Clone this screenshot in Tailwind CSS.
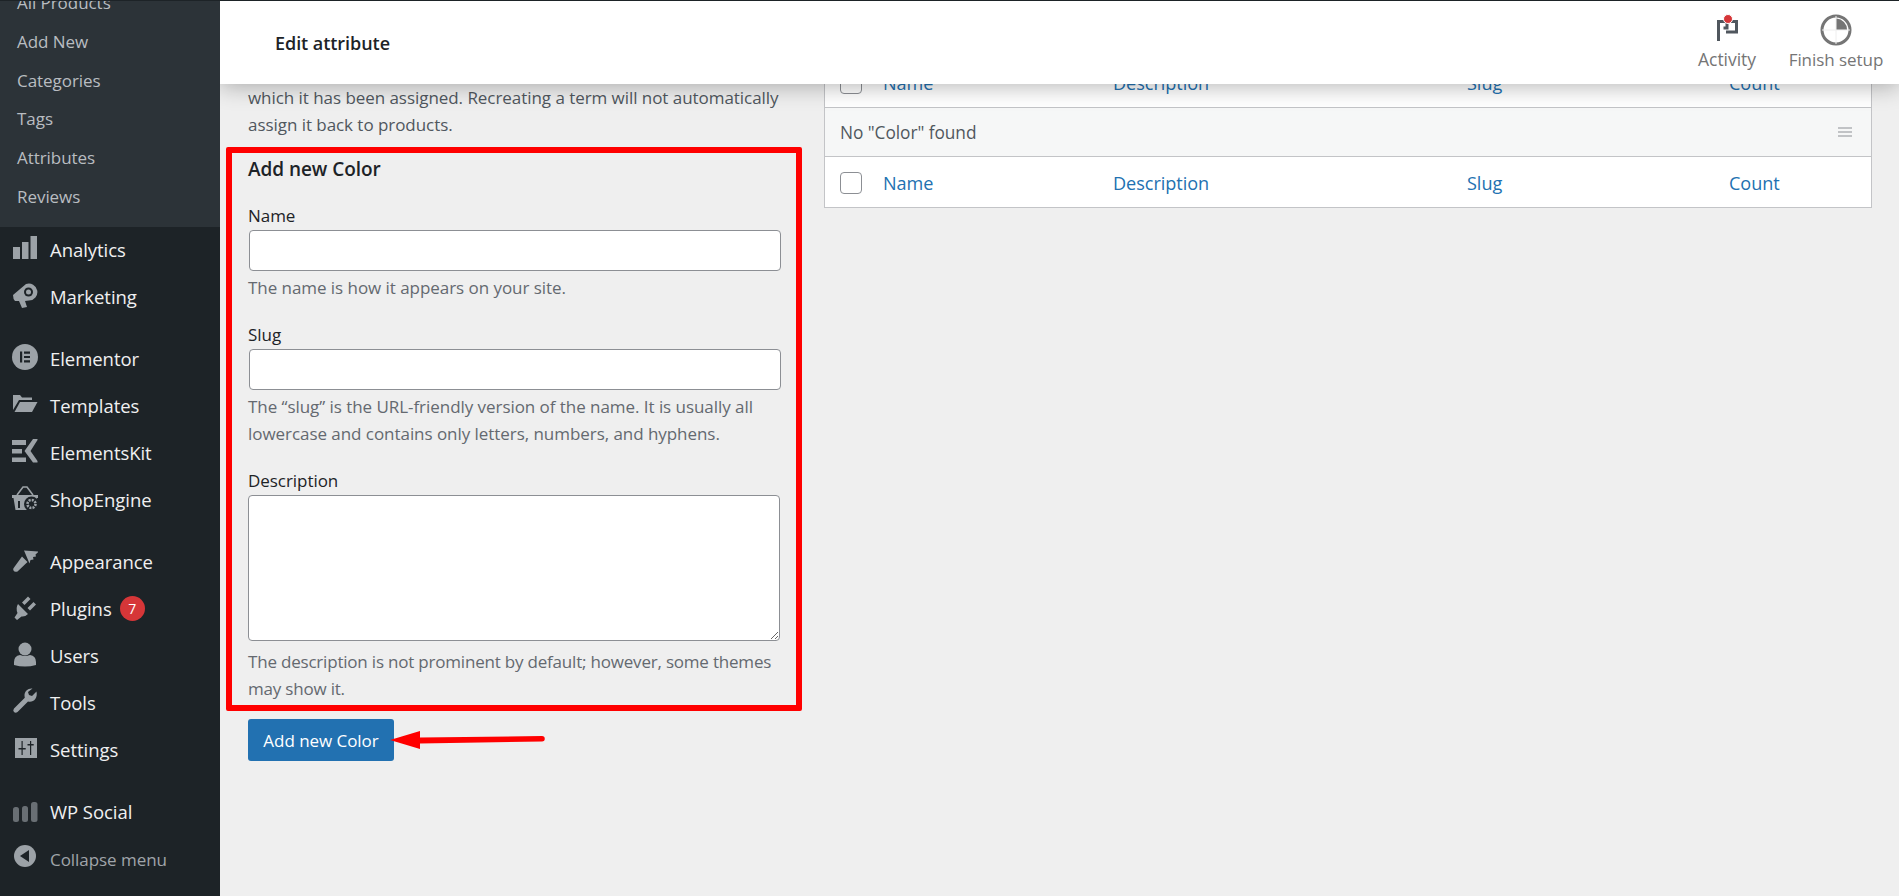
<!DOCTYPE html>
<html lang="en">
<head>
    <meta charset="UTF-8">
    <title>Edit attribute</title>
    <script src="https://cdn.jsdelivr.net/npm/@tailwindcss/browser@4"></script>
</head>
<body class="font-['Open_Sans',sans-serif] text-[17px] leading-[27px] tracking-[-0.05px]">
    <div class="flex h-[896px] w-full overflow-hidden bg-[#efefef]">

        <!-- Sidebar -->
        <aside class="w-[220px] shrink-0 overflow-hidden border-t border-[#1d2327] bg-[#1d2327] text-[18.5px] text-[#f0f0f1]">
            <ul class="-mt-[17.5px] bg-[#2c3338] pb-[11.3px] pl-[17px] text-[17px] text-[#b9bdc1]">
                <li class="flex h-[38.7px] items-center">All Products</li>
                <li class="flex h-[38.7px] items-center">Add New</li>
                <li class="flex h-[38.7px] items-center">Categories</li>
                <li class="flex h-[38.7px] items-center">Tags</li>
                <li class="flex h-[38.7px] items-center">Attributes</li>
                <li class="flex h-[38.7px] items-center">Reviews</li>
            </ul>

            <a class="flex h-[47px] items-center gap-3 pb-0.5 pl-3">
                <svg class="-mt-0.5 h-[26px] w-[26px] fill-[#9ca2a7]" viewBox="0 0 26 26"><rect x="1" y="12" width="7" height="12"/><rect x="10" y="7" width="6.5" height="17"/><rect x="18.5" y="1" width="6.5" height="23"/></svg>
                Analytics
            </a>
            <a class="flex h-[47px] items-center gap-3 pb-0.5 pl-3">
                <svg class="-mt-0.5 h-[26px] w-[26px] fill-[#9ca2a7]" viewBox="0 0 26 26"><path d="M1 13 14 2A8.500 8.500 0 1 1 17 18.500L13 19l2 6-5 1-3-7H3Q1 17 1 13Z"/><circle cx="16.500" cy="10" r="4.500" fill="#1d2327"/><circle cx="16.500" cy="10" r="2.500"/></svg>
                Marketing
            </a>

            <a class="mt-[15px] flex h-[47px] items-center gap-3 pb-0.5 pl-3">
                <svg class="-mt-0.5 h-[26px] w-[26px]" viewBox="0 0 26 26"><circle cx="13" cy="13" r="13" fill="#9ca2a7"/><path fill="#1d2327" d="M8 7.500h2.200v11H8zM12 7.500h6v2.200h-6zM12 11.900h6v2.200h-6zM12 16.300h6v2.200h-6z"/></svg>
                Elementor
            </a>
            <a class="flex h-[47px] items-center gap-3 pb-0.5 pl-3">
                <svg class="-mt-0.5 h-[26px] w-[26px] fill-[#9ca2a7]" viewBox="0 0 26 26"><path d="M1 19V4h7l2 2.500h10V9H7Z"/><path d="M2.500 21 8 11h17.500L20 21Z"/></svg>
                Templates
            </a>
            <a class="flex h-[47px] items-center gap-3 pb-0.5 pl-3">
                <svg class="-mt-0.5 h-[26px] w-[26px] fill-[#9ca2a7]" viewBox="0 0 26 26"><path d="M0 2h14v5H0zM0 11h10v4.500H0zM0 19.500h14V24H0z"/><path d="M21 1h4.500v1L18.500 13l7 10v1.500H21L12.500 13Z"/></svg>
                ElementsKit
            </a>
            <a class="flex h-[47px] items-center gap-3 pb-0.5 pl-3">
                <svg class="-mt-0.5 h-[26px] w-[26px]" viewBox="0 0 26 26"><path fill="#9ca2a7" d="M0 10h27l-1 3H25l-2 12H3.500L1.500 13H0Z"/><path fill="none" stroke="#9ca2a7" stroke-width="1.600" d="m5 10 6-8h4l6 8"/><circle cx="19.500" cy="19" r="7.500" fill="#1d2327"/><circle cx="19.500" cy="19" r="4" fill="none" stroke="#9ca2a7" stroke-width="2.600" stroke-dasharray="2 1.100"/><path fill="#1d2327" d="M6 16h2v7H6z"/></svg>
                ShopEngine
            </a>

            <a class="mt-[15px] flex h-[47px] items-center gap-3 pb-0.5 pl-3">
                <svg class="-mt-0.5 h-[26px] w-[26px] fill-[#9ca2a7]" viewBox="0 0 26 26"><path d="M12 3.500 27 4.500l-3.500 3 .5 2-3 .5.500 2.500-3 .5-1 3.500Z"/><path d="M10 9.500l5.500 5.500L5.500 24.500q-3 1-4-1-1-1.500.5-3Z"/></svg>
                Appearance
            </a>
            <a class="flex h-[47px] items-center gap-3 pb-0.5 pl-3">
                <svg class="-mt-0.5 h-[26px] w-[26px] fill-[#9ca2a7]" viewBox="0 0 26 26"><path d="M6 10 16 20q-3 3-6.500 2.500L5 26 2.500 23.500 5.500 19Q3.500 14 6 10Z"/><path d="M10 8.500 16 2.500l2.500 2.500-6 6ZM15.500 14l6-6 2.500 2.500-6 6Z"/></svg>
                <span>Plugins</span>
                <span class="-ml-1 flex h-[25px] w-[25px] items-center justify-center rounded-full bg-[#d63638] text-[14px] text-white">7</span>
            </a>
            <a class="flex h-[47px] items-center gap-3 pb-0.5 pl-3">
                <svg class="-mt-0.5 h-[26px] w-[26px] fill-[#9ca2a7]" viewBox="0 0 26 26"><circle cx="13" cy="8" r="6.500"/><path d="M2 21q0-6 6-7 5 2 10 0 6 1 6 7v3q-11 3-22 0Z"/></svg>
                Users
            </a>
            <a class="flex h-[47px] items-center gap-3 pb-0.5 pl-3">
                <svg class="-mt-0.5 h-[26px] w-[26px] fill-[#9ca2a7]" viewBox="0 0 26 26"><path d="M24.500 3.500 20 8l-3-1-1-3 4.500-3.500C16 0 12.500 3 12.500 7.500c0 1 .2 1.600.3 2.200L2 20.500Q.5 22.500 2 24t3.500 0L16 13.500c5 1.500 10-3 8.500-10Z"/></svg>
                Tools
            </a>
            <a class="flex h-[47px] items-center gap-3 pb-0.5 pl-3">
                <svg class="-mt-0.5 h-[26px] w-[26px]" viewBox="0 0 26 26"><rect x="3" y="3" width="22" height="20" fill="#9ca2a7"/><path fill="#1d2327" d="M9.500 6h1.200v7H9.500zM6.500 13h7.200v1.400H6.500zM9.500 14.400h1.200V20H9.500zM18 6h1.200V20H18zM15.500 9h6.200v1.400h-6.200z"/></svg>
                Settings
            </a>

            <a class="mt-[15px] flex h-[47px] items-center gap-3 pb-0.5 pl-3">
                <svg class="-mt-0.5 h-[26px] w-[26px] fill-[#9ca2a7] opacity-60" viewBox="0 0 26 26"><rect x="1" y="10" width="6" height="15" rx="2.500"/><rect x="10" y="9" width="6" height="16" rx="2.500"/><rect x="19" y="5" width="6.500" height="20" rx="2.500"/></svg>
                WP Social
            </a>
            <a class="flex h-[47px] items-center gap-3 pl-3 text-[17px] text-[#a0a5aa]">
                <svg class="-mt-1 h-[26px] w-[26px]" viewBox="0 0 26 26"><circle cx="13" cy="12" r="11" fill="#9ca2a7"/><path fill="#1d2327" d="M17 6v12l-9-6Z"/></svg>
                Collapse menu
            </a>
        </aside>

        <!-- Main -->
        <main class="relative flex flex-1 gap-[44px] overflow-hidden pl-7">

            <!-- Top bar -->
            <header class="absolute inset-x-0 top-0 z-10 flex h-[84px] items-center justify-between border-t border-[#1d2327] bg-white pl-[55px] shadow-[0_2px_22px_rgba(0,0,0,0.3)]">
                <h1 class="mt-0.5 text-[18px] font-semibold text-[#1d2327]">Edit attribute</h1>
                <div class="flex self-start pr-[7px] pt-[13px] text-[#757575]">
                    <div class="flex w-[106px] flex-col items-center">
                        <svg class="-mt-px h-[30px] w-[30px]" viewBox="0 0 30 30"><path fill="none" stroke="#50575e" stroke-width="3" d="M6.500 28V8.500h8.500v6.500h-3.500M15 8.500h9.500V19H14"/><circle cx="16" cy="6" r="4.500" fill="#d63638" stroke="white"/></svg>
                        <span class="mt-[3px] text-[17.5px]">Activity</span>
                    </div>
                    <div class="flex w-[112px] flex-col items-center">
                        <svg class="h-[32px] w-[32px]" viewBox="0 0 32 32"><circle cx="16" cy="16" r="14" fill="white" stroke="#757575" stroke-width="3"/><path stroke="#eeeeee" d="M16 2v28M2 16h28"/><path fill="#757575" d="M16.500 4.500A11 11 0 0 1 27 15.500H16.500Z"/></svg>
                        <span>Finish setup</span>
                    </div>
                </div>
            </header>

            <!-- Add term form -->
            <section class="w-[532px] shrink-0">
                <p class="mt-[84px] text-[#50575e]">which it has been assigned. Recreating a term will not automatically assign it back to products.</p>

                <form class="-mx-[22px] mt-[9px] h-[564px] w-[576px] rounded-[2px] border-[6px] border-[#ff0000] px-4">
                    <h2 class="pt-[3px] text-[19px] font-semibold text-[#1d2327]">Add new Color</h2>

                    <label class="mt-[19px] mb-px block text-[#1d2327]">Name</label>
                    <input type="text" class="ml-px block h-[41px] w-[532px] rounded-[4px] border border-[#8c8f94] bg-white">
                    <p class="mt-[3px] text-[#646970]">The name is how it appears on your site.</p>

                    <label class="mt-5 mb-px block text-[#1d2327]">Slug</label>
                    <input type="text" class="ml-px block h-[41px] w-[532px] rounded-[4px] border border-[#8c8f94] bg-white">
                    <p class="mt-[3px] text-[#646970]">The “slug” is the URL-friendly version of the name. It is usually all lowercase and contains only letters, numbers, and hyphens.</p>

                    <label class="mt-5 mb-px block text-[#1d2327]">Description</label>
                    <textarea class="block h-[146px] w-[532px] rounded-[4px] border border-[#8c8f94] bg-white"></textarea>
                    <p class="mt-[7px] tracking-[-0.2px] text-[#646970]">The description is not prominent by default; however, some themes may show it.</p>
                </form>

                <div class="mt-2 flex items-center">
                    <button class="h-[42px] w-[146px] rounded-[3px] bg-[#2271b1] text-white">Add new Color</button>
                    <svg class="-ml-1 h-[24px] w-[160px]" viewBox="0 0 160 24"><path fill="#ff0000" d="M0 12 30 3v6.500l122-1.500a2.500 2.500 0 0 1 0 5.500L30 15.500V21Z"/></svg>
                </div>
            </section>

            <!-- Terms table -->
            <section class="mt-[57px] h-fit w-[1048px] border border-t-0 border-[#c3c4c7] bg-white text-[18.1px] text-[#2271b1]">
                <div class="grid h-[50px] grid-cols-[58px_230px_354px_262px_1fr] items-center pt-0.5">
                    <span class="ml-[15px] h-[22px] w-[22px] rounded-[4px] border border-[#8c8f94]"></span>
                    <span>Name</span><span>Description</span><span>Slug</span><span>Count</span>
                </div>
                <div class="flex h-[50px] items-center justify-between border-y border-[#c3c4c7] bg-[#f6f7f7] pl-[15px] pr-[19px] text-[17.3px] text-[#50575e]">
                    <span>No "Color" found</span>
                    <svg class="h-[10px] w-[14px] stroke-[#8c8f94]" viewBox="0 0 14 10"><path d="M0 1h14M0 5h14M0 9h14"/></svg>
                </div>
                <div class="grid h-[50px] grid-cols-[58px_230px_354px_262px_1fr] items-center pt-0.5">
                    <span class="ml-[15px] h-[22px] w-[22px] rounded-[4px] border border-[#8c8f94]"></span>
                    <span>Name</span><span>Description</span><span>Slug</span><span>Count</span>
                </div>
            </section>
        </main>
    </div>
</body>
</html>
